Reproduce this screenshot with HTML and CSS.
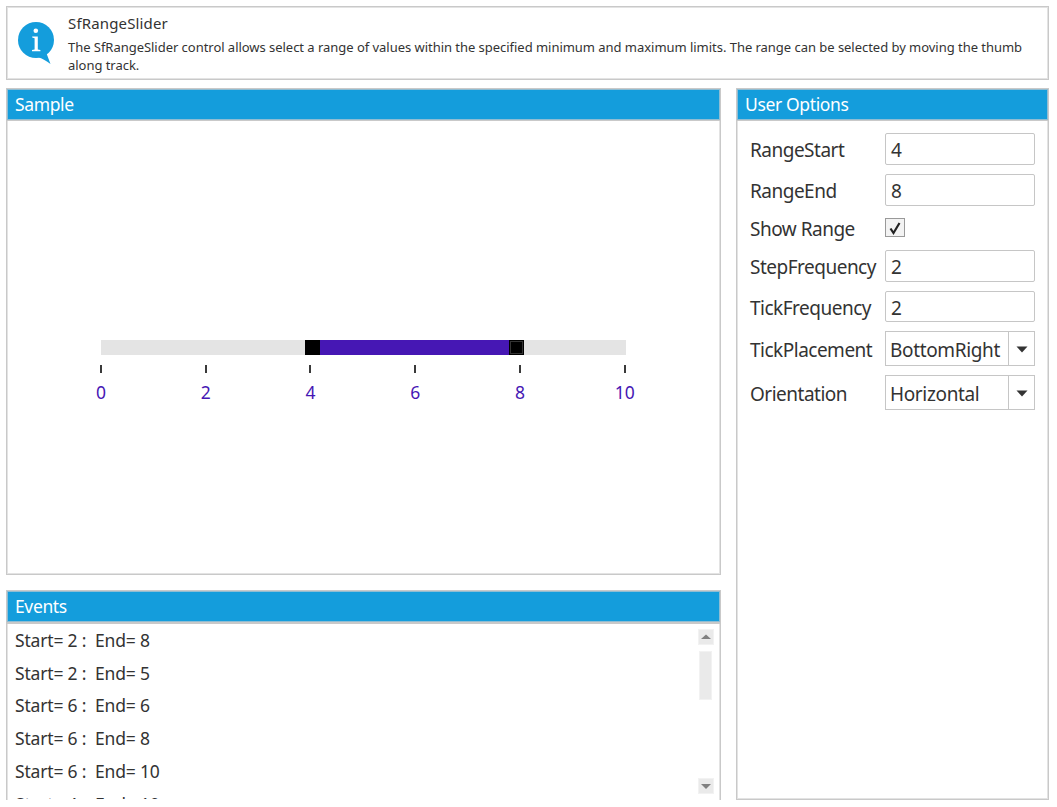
FILE: index.html
```
<!DOCTYPE html>
<html lang="en">
<head>
<meta charset="utf-8">
<title>SfRangeSlider</title>
<link rel="stylesheet" href="styles.css">
</head>
<body>
<div class="page">
  <header class="box intro">
    <svg class="info" width="38" height="44" viewBox="0 0 38 44"><circle cx="19" cy="19" r="18" fill="#149ddc"/><path d="M22 36.500c3.500 1 7 3.500 11.500 6.500L29 31z" fill="#149ddc"/><circle cx="18.800" cy="9.700" r="2.300" fill="#fff"/><path d="M15.200 15.400h5.600v13l2.600.6v1.200h-8.400v-1.200l2.600-.6v-11.200l-2.400-.6z" fill="#fff"/></svg>
    <div class="intro-text">
      <h1 class="title">SfRangeSlider</h1>
      <p class="desc"><span class="line">The SfRangeSlider control allows select a range of values within the specified minimum and maximum limits. The range can be selected by moving the thumb</span> <span class="line">along track.</span></p>
    </div>
  </header>
  <div class="columns">
    <main class="left">
      <section class="box sample">
        <h2 class="head">Sample</h2>
        <div class="slider">
          <div class="track"><div class="range"><i class="thumb"></i><i class="thumb focus"></i></div></div>
          <div class="ticks">
            <span class="tick">0</span><span class="tick">2</span><span class="tick">4</span><span class="tick">6</span><span class="tick">8</span><span class="tick last">10</span>
          </div>
        </div>
      </section>
      <section class="box events">
        <h2 class="head">Events</h2>
        <div class="log">
          <ul class="list">
            <li>Start= 2 :&nbsp; End= 8</li><li>Start= 2 :&nbsp; End= 5</li><li>Start= 6 :&nbsp; End= 6</li><li>Start= 6 :&nbsp; End= 8</li><li>Start= 6 :&nbsp; End= 10</li><li>Start= 4 :&nbsp; End= 10</li>
          </ul>
          <div class="scroll">
            <span class="arrow"><svg width="16" height="16"><path d="M3 10l5-4.500 5 4.500z" fill="#808080"/></svg></span>
            <span class="grip"></span>
            <span class="arrow down"><svg width="16" height="16"><path d="M3 6l5 5 5-5z" fill="#808080"/></svg></span>
          </div>
        </div>
      </section>
    </main>
    <aside class="box options">
      <h2 class="head">User Options</h2>
      <div class="form">
        <span class="label">RangeStart</span><span class="input">4</span>
        <span class="label">RangeEnd</span><span class="input">8</span>
        <span class="label">Show Range</span><span class="check"><svg width="18" height="18"><path d="M4.500 9.500l3 4.500 6-10" fill="none" stroke="#222" stroke-width="2.200"/></svg></span>
        <span class="label">StepFrequency</span><span class="input">2</span>
        <span class="label">TickFrequency</span><span class="input short">2</span>
        <span class="label tall">TickPlacement</span><span class="combo"><span class="value">BottomRight</span><span class="drop"><svg width="12" height="7"><path d="M.5.5h11L6 6.500z" fill="#333"/></svg></span></span>
        <span class="label tall">Orientation</span><span class="combo"><span class="value">Horizontal</span><span class="drop"><svg width="12" height="7"><path d="M.5.5h11L6 6.500z" fill="#333"/></svg></span></span>
      </div>
    </aside>
  </div>
</div>
</body>
</html>
```
FILE: styles.css
```
* { box-sizing: border-box; }
body { margin: 0; background: #fff; color: #333; font-family: "Noto Sans", sans-serif; }
h1, h2, p, ul { margin: 0; padding: 0; font-weight: 400; list-style: none; }
.page { width: 1057px; height: 800px; padding: 6px 8px 0 6px; overflow: hidden; }
.box { border: 1px solid #c9c9c9; box-shadow: inset 0 0 0 1px #e3e3e3; }
.intro { height: 74px; display: flex; padding: 14px 0 0 10px; }
.info { flex: none; }
.intro-text { padding-left: 13px; margin-top: -8px; white-space: nowrap; }
.title { font-size: 15px; line-height: 20px; letter-spacing: .15px; }
.desc { font-size: 13px; line-height: 18px; padding-top: 5px; letter-spacing: -.035px; }
.line { display: block; }
.columns { display: flex; justify-content: space-between; margin-top: 8px; }
.left { width: 715px; }
.sample { height: 487px; }
.head { height: 31px; border: 1px solid #8fbdd3; background: #149ddc; color: #fff; font-size: 17.500px; letter-spacing: -.36px; line-height: 29px; padding-left: 7px; box-shadow: 0 1px #c9c9c9; }
.slider { margin: 220px 94px 0; }
.track { height: 15px; background: #e4e4e4; }
.range { width: 219px; height: 15px; margin-left: 204px; background: #4617b4; display: flex; justify-content: space-between; }
.thumb { width: 15px; height: 15px; background: #000; border: 1px solid #000; }
.focus { box-shadow: inset 0 0 0 1px #333; }
.ticks { display: flex; margin: 10px 0 0 -52.600px; width: 640px; }
.tick { width: 104.800px; text-align: center; color: #4617b4; font-size: 17.500px; letter-spacing: -.2px; line-height: 24px; }
.tick::before { content: ""; display: block; width: 2px; height: 8px; margin: 0 auto 7px; background: #3a3a3a; }
.last { text-indent: 8px; }
.last { letter-spacing: 0; }
.events { height: 220px; margin-top: 15px; }
.events .head { box-shadow: 0 2px #c9c9c9; }
.log { display: flex; justify-content: space-between; height: 176px; margin-top: 1px; overflow: hidden; }
.events { height: 211px; border-bottom: 0; }
.list { padding: 1px 0 0 8px; font-size: 17.500px; letter-spacing: -.18px; line-height: 32.700px; white-space: nowrap; }
.scroll { width: 16px; margin: 6px 6px 0 0; height: 165px; display: flex; flex-direction: column; align-items: center; }
.arrow { width: 16px; height: 16px; background: #eaeaea; border: 1px solid #f2f2f2; }
.arrow svg { display: block; margin: -1px; }
.grip { width: 13px; height: 49px; background: #eaeaea; border: 1px solid #f2f2f2; margin: 6px 1px 0 0; }
.down { margin-top: auto; }
.options { width: 313px; height: 712px; }
.form { display: grid; grid-template-columns: 135px 150px; grid-template-rows: 41px 38px 38px 41px 40px 44px 44px; align-items: start; padding: 13px 0 0 13px; font-size: 19px; letter-spacing: -.5px; white-space: nowrap; }
.label { line-height: 35px; }
.tall { line-height: 39px; }
.input { height: 32px; border: 1px solid #c6c6c6; border-radius: 2px; padding-left: 5px; line-height: 32px; }
.short { height: 31px; }
.check { width: 20px; height: 19px; margin-top: 6px; border: 1px solid #999; background: #f3f3f3; }
.check svg { display: block; }
.combo { height: 35px; display: flex; border: 1px solid #c6c6c6; line-height: 37px; letter-spacing: -.35px; }
.value { flex: 1; padding-left: 4px; }
.drop { width: 26px; height: 33px; padding-top: 1px; border-left: 1px solid #c6c6c6; display: flex; justify-content: center; align-items: center; }
```
